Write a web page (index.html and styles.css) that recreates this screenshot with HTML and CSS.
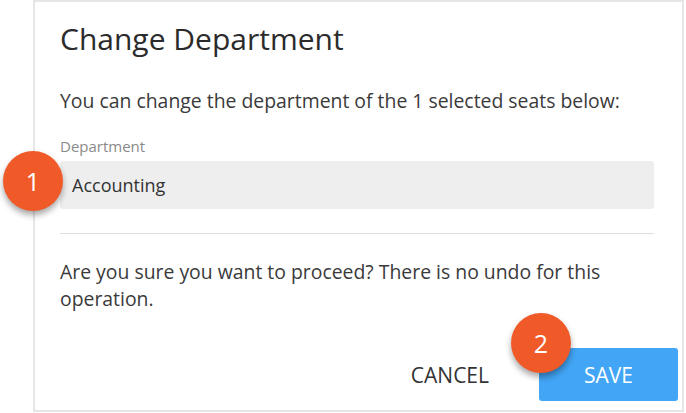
FILE: index.html
```html
<!DOCTYPE html>
<html>
<head>
<meta charset="utf-8">
<link rel="stylesheet" href="styles.css">
</head>
<body>
<div class="dialog">
  <h1 class="title">Change Department</h1>
  <p class="intro">You can change the department of the 1 selected seats below:</p>
  <div class="field">
    <label class="field-label">Department</label>
    <div class="field-input">Accounting<span class="badge badge-1">1</span></div>
  </div>
  <hr class="divider">
  <p class="warning">Are you sure you want to proceed? There is no undo for this operation.</p>
  <div class="actions">
    <button class="btn btn-cancel">CANCEL</button>
    <div class="save-wrap">
      <button class="btn btn-save">SAVE</button>
      <span class="badge badge-2">2</span>
    </div>
  </div>
</div>
</body>
</html>
```

FILE: styles.css
```css
html, body {
  margin: 0;
  padding: 0;
  background: #ffffff;
}
body {
  font-family: "Open Sans", "Noto Sans", sans-serif;
  color: #333333;
}
.dialog {
  box-sizing: border-box;
  margin-left: 33px;
  width: 651px;
  height: 412px;
  border: 2px solid #e6e6e6;
  padding: 0 28px 0 25px;
  display: flex;
  flex-direction: column;
}
.title {
  margin: 17px 0 0 0;
  font-size: 30px;
  line-height: 40px;
  font-weight: 400;
  color: #2b2b2b;
}
.intro {
  margin: 29px 0 0 0;
  font-size: 19.4px;
  line-height: 26px;
  color: #3a3a3a;
}
.field {
  margin-top: 22px;
}
.field-label {
  display: block;
  font-size: 15px;
  line-height: 20px;
  color: #8a8a8a;
}
.field-input {
  position: relative;
  margin-top: 5px;
  height: 48px;
  background: #eeeeee;
  border-radius: 3px;
  padding-left: 12px;
  font-size: 18px;
  line-height: 48px;
  color: #333333;
}
.divider {
  margin: 24px 0 0 0;
  border: 0;
  border-top: 1px solid #e0e0e0;
  height: 0;
}
.warning {
  margin: 24px 0 0 0;
  font-size: 19.4px;
  line-height: 27px;
  color: #3a3a3a;
}
.actions {
  margin-top: auto;
  margin-right: -24px;
  margin-bottom: 9px;
  display: flex;
  justify-content: flex-end;
  align-items: center;
  gap: 30px;
}
.btn {
  font-family: "Open Sans", "Noto Sans", sans-serif;
  font-size: 21px;
  border: 0;
  border-radius: 3px;
  cursor: pointer;
}
.btn-cancel {
  background: transparent;
  color: #333333;
  padding: 0 20px;
}
.save-wrap {
  position: relative;
}
.btn-save {
  display: block;
  width: 139px;
  height: 53px;
  background: #42a5f5;
  color: #ffffff;
}
.badge {
  position: absolute;
  width: 60px;
  height: 60px;
  border-radius: 50%;
  background: #f05a28;
  color: #ffffff;
  font-size: 25px;
  line-height: 60px;
  text-align: center;
  box-shadow: 0 4px 6px rgba(0, 0, 0, 0.35);
}
.badge-1 {
  left: -57px;
  top: -10px;
}
.badge-2 {
  left: -28px;
  top: -35px;
}
```
